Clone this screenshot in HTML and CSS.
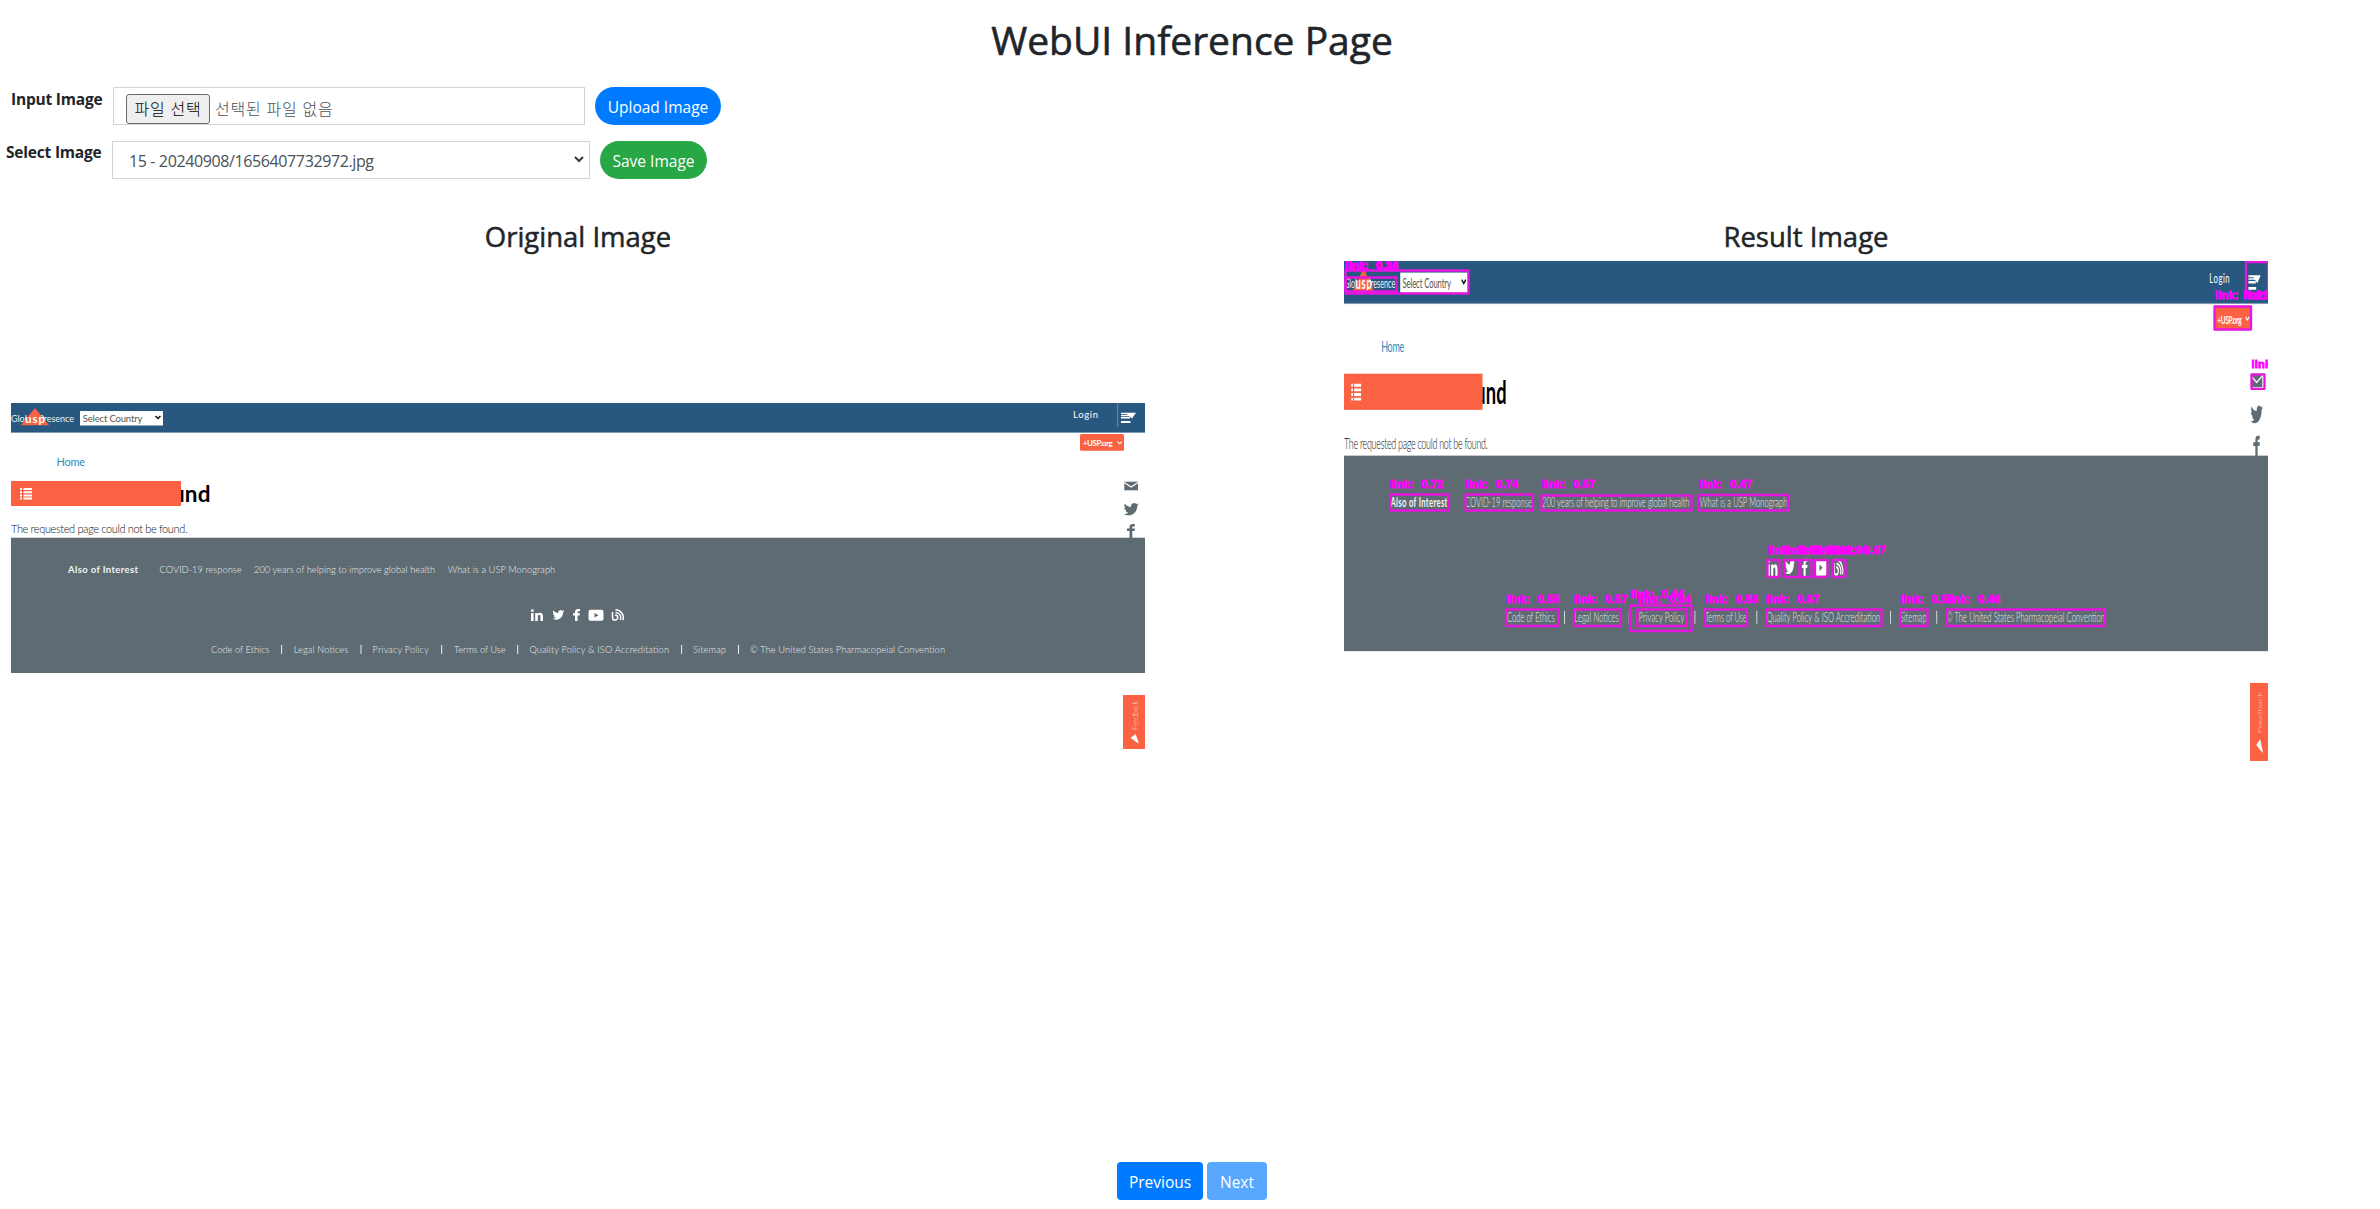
FILE: index.html
```html
<!DOCTYPE html>
<html lang="ko">
<head>
<meta charset="utf-8">
<title>WebUI Inference Page</title>
<link rel="stylesheet" href="styles.css">
</head>
<body>
<h1 class="title">WebUI Inference Page</h1>

<form class="controls">
  <div class="row row-upload">
    <label class="label">Input Image</label>
    <div class="field file"><span class="file-button">파일 선택</span><span class="file-name">선택된 파일 없음</span></div>
    <button type="button" class="btn pill primary upload">Upload Image</button>
  </div>
  <div class="row row-select">
    <label class="label">Select Image</label>
    <div class="field select"><span class="select-value">15 - 20240908/1656407732972.jpg</span>
      <svg class="caret" viewBox="0 0 10 7"><path d="M1 1l4 4 4-4" fill="none" stroke="#343a40" stroke-width="2"/></svg></div>
    <button type="button" class="btn pill success save">Save Image</button>
  </div>
</form>

<main class="gallery">
  <section class="panel original">
    <h2 class="heading">Original Image</h2>
    <svg class="shot shot-original" viewBox="0 0 1134 638">
      <rect width="1134" height="29.6" fill="#28587f"/>
      <rect y="29" width="1134" height="1" fill="#7d9ab2"/>
      <text class="rg" x="0" y="18.6" font-size="9" textLength="63" fill="#e6edf2">Global Presence</text>
      <path d="M24 5L38 22.3H9.7z" fill="#fb6244"/>
      <text class="bd" x="14" y="19.6" font-size="11.5" textLength="20" fill="#fff">usp</text>
      <rect x="69" y="8" width="83" height="14.5" fill="#fff"/>
      <text class="rg" x="71.7" y="18.6" font-size="9.5" textLength="59.7" fill="#555">Select Country</text>
      <path d="M144.5 13l2.5 2.5 2.5-2.5" fill="none" stroke="#111" stroke-width="1.5"/>
      <text class="rg" x="1062" y="15.2" font-size="9.5" textLength="25" fill="#fff">Login</text>
      <path d="M1106.7 0v24" stroke="#8a9c7c" stroke-width=".8"/>
      <path d="M1110 9.8h15l-4 5.6-3-2.4h-8v-1h7l-1-.7h-6zM1110 13.8h9v1.8h-9zM1110 18h9.5v1.9h-9.5z" fill="#fff"/>
      <rect x="1069" y="31" width="44" height="16.7" rx="1.5" fill="#fb6244"/>
      <text class="bd" x="1071.7" y="43.3" font-size="8" textLength="30" fill="#fff">+USP.org</text>
      <path d="M1106.5 38.7l2.2 2.2 2.2-2.2" fill="none" stroke="#fff" stroke-width="1.1"/>
      <path d="M1113.3 78.7h13.7v8.6h-13.7z" fill="#5f6b72"/>
      <path d="M1113.3 79.5l6.85 4.5 6.85-4.5" fill="none" stroke="#fff" stroke-width="1.2"/>
      <path transform="translate(1112.7 98.7) scale(.625)" fill="#5f6b72" d="M23.95 4.57a10 10 0 0 1-2.82.77 4.96 4.96 0 0 0 2.16-2.72c-.95.56-2 .97-3.13 1.19a4.92 4.92 0 0 0-8.38 4.48C7.69 8.1 4.07 6.13 1.64 3.16a4.82 4.82 0 0 0-.67 2.48c0 1.71.87 3.21 2.19 4.1a4.9 4.9 0 0 1-2.23-.62v.06a4.92 4.92 0 0 0 3.95 4.83 5 5 0 0 1-2.21.08 4.94 4.94 0 0 0 4.6 3.42A9.87 9.87 0 0 1 0 19.54a14 14 0 0 0 7.55 2.21c9.05 0 14-7.5 14-13.98 0-.21 0-.42-.02-.63a9.94 9.94 0 0 0 2.46-2.55z"/>
      <path d="M1118.5 136v-8h-2.5v-2.6h2.5v-1.4c0-2 1.3-3 3.2-3h2.1v2.5h-1.4c-.8 0-1.1.4-1.1 1v.9h2.7l-.4 2.6h-2.3v8z" fill="#5f6b72"/>
      <text class="rg" x="45.6" y="62.7" font-size="11" textLength="28.4" fill="#358cb5">Home</text>
      <text class="bd" x="161" y="98.7" font-size="22.5" textLength="38.5" fill="#000">und</text>
      <rect y="78" width="170" height="25" fill="#fb6244"/>
      <path d="M9 86h2M12.5 86H21M9 89.2h2M12.5 89.2H21M9 92.4h2M12.5 92.4H21M9 95.6h2M12.5 95.6H21" stroke="#fff" stroke-width="2"/>
      <text class="lt" x="0" y="130.3" font-size="11" textLength="176.5" fill="#111">The requested page could not be found.</text>
      <rect y="134.7" width="1134" height="135.3" fill="#5f6b72"/>
      <g font-size="9.3" fill="#e6edf0">
        <text class="bd" x="57" y="170.3" font-size="9.5" textLength="70" fill="#f0f3f4">Also of Interest</text>
        <text class="lt" x="148.6" y="170.3" textLength="82">COVID-19 response</text>
        <text class="lt" x="243" y="170.3" textLength="181">200 years of helping to improve global health</text>
        <text class="lt" x="436.7" y="170.3" textLength="107.5">What is a USP Monograph</text>
        <text class="lt" x="200" y="250" textLength="58.5">Code of Ethics</text>
        <text class="lt" x="282.7" y="250" textLength="54.5">Legal Notices</text>
        <text class="lt" x="361.6" y="250" textLength="56.2">Privacy Policy</text>
        <text class="lt" x="443" y="250" textLength="51.5">Terms of Use</text>
        <text class="lt" x="518.4" y="250" textLength="139.6">Quality Policy &amp; ISO Accreditation</text>
        <text class="lt" x="682" y="250" textLength="33">Sitemap</text>
        <text class="lt" x="739" y="250" textLength="195">© The United States Pharmacopeial Convention</text>
      </g>
      <path d="M270.6 242v9M350 242v9M430.7 242v9M506.7 242v9M670.6 242v9M727.5 242v9" stroke="#e8edef"/>
      <g fill="#fff">
        <path d="M520 210h2.6v8H520zM520 206.5h2.6v2.2H520zM524.2 210h2.5v1.2c1-2 5.3-2 5.3 1.7v5.1h-2.6v-4.5c0-2-2.6-1.8-2.6 0v4.5h-2.6z"/>
        <path transform="translate(541.5 206) scale(.49)" d="M23.95 4.57a10 10 0 0 1-2.82.77 4.96 4.96 0 0 0 2.16-2.72c-.95.56-2 .97-3.13 1.19a4.92 4.92 0 0 0-8.38 4.48C7.69 8.1 4.07 6.13 1.64 3.16a4.82 4.82 0 0 0-.67 2.48c0 1.71.87 3.21 2.19 4.1a4.9 4.9 0 0 1-2.23-.62v.06a4.92 4.92 0 0 0 3.95 4.83 5 5 0 0 1-2.21.08 4.94 4.94 0 0 0 4.6 3.42A9.87 9.87 0 0 1 0 19.54a14 14 0 0 0 7.55 2.21c9.05 0 14-7.5 14-13.98 0-.21 0-.42-.02-.63a9.94 9.94 0 0 0 2.46-2.55z"/>
        <path d="M564 218v-5.5h-2v-2.2h2v-1.3c0-2 1.2-3 3-3h2v2.2h-1.2c-.8 0-1.2.4-1.2 1v1.1h2.3l-.4 2.2h-1.9v5.5z"/>
        <path fill-rule="evenodd" d="M579.5 206.8h11q2 0 2 2v7q0 2-2 2h-11q-2 0-2-2v-7q0-2 2-2zM583.5 210v4.600l4-2.300z"/>
      </g>
      <path d="M601.5 209v5.500a2.600 2.600 0 1 0 2.600-2.600M604.500 209.500a5.500 5.500 0 0 1 5 7.500M604.500 206.800a8 8 0 0 1 7.500 10.200" fill="none" stroke="#fff" stroke-width="1.5"/>
      <rect x="1112" y="292" width="22" height="54" fill="#fb6244"/>
      <text class="lt" transform="translate(1126.5 327) rotate(-90)" font-size="7.5" textLength="29" fill="#ffd3c8">Feedback</text>
      <path d="M1119.5 335l5-4 3.500 9.500-3.500-2-2.500-2z" fill="#fff"/>
    </svg>
  </section>

  <section class="panel result">
    <h2 class="heading">Result Image</h2>
    <svg class="shot shot-result" viewBox="0 0 924 900">
      <g transform="scale(.8148 1.445)">
      <rect width="1134" height="29.6" fill="#28587f"/>
      <rect y="29" width="1134" height=".8" fill="#7d9ab2"/>
      <text class="rg" x="0" y="18.6" font-size="9" textLength="63" fill="#e6edf2">Global Presence</text>
      <path d="M24 5L38 22.3H9.7z" fill="#fb6244"/>
      <text class="bd" x="14" y="19.6" font-size="11.5" textLength="20" fill="#fff">usp</text>
      <rect x="69" y="8" width="83" height="14" fill="#fff"/>
      <text class="rg" x="71.7" y="18.6" font-size="9.5" textLength="59.7" fill="#555">Select Country</text>
      <path d="M144.5 13l2.5 2.5 2.5-2.5" fill="none" stroke="#111" stroke-width="1.5"/>
      <text class="rg" x="1062" y="15.2" font-size="9.5" textLength="25" fill="#fff">Login</text>
      <path d="M1110 9.8h15l-4 5.6-3-2.4h-8v-1h7l-1-.7h-6zM1110 13.8h9v1.8h-9zM1110 18h9.5v1.9h-9.5z" fill="#fff"/>
      <rect x="1069" y="31" width="44" height="16.7" fill="#fb6244"/>
      <text class="bd" x="1071.7" y="43.3" font-size="8" textLength="30" fill="#fff">+USP.org</text>
      <path d="M1106.5 38.7l2.2 2.2 2.2-2.2" fill="none" stroke="#fff" stroke-width="1.1"/>
      <path d="M1113.3 78.7h13.7v8.6h-13.7z" fill="#5f6b72"/>
      <path d="M1113.3 79.5l6.85 4.5 6.85-4.5" fill="none" stroke="#fff" stroke-width="1.2"/>
      <path transform="translate(1112.7 98.7) scale(.625)" fill="#5f6b72" d="M23.95 4.57a10 10 0 0 1-2.82.77 4.96 4.96 0 0 0 2.16-2.72c-.95.56-2 .97-3.13 1.19a4.92 4.92 0 0 0-8.38 4.48C7.69 8.1 4.07 6.13 1.64 3.16a4.82 4.82 0 0 0-.67 2.48c0 1.71.87 3.21 2.19 4.1a4.9 4.9 0 0 1-2.23-.62v.06a4.92 4.92 0 0 0 3.95 4.83 5 5 0 0 1-2.21.08 4.94 4.94 0 0 0 4.6 3.42A9.87 9.87 0 0 1 0 19.54a14 14 0 0 0 7.55 2.21c9.05 0 14-7.5 14-13.98 0-.21 0-.42-.02-.63a9.94 9.94 0 0 0 2.46-2.55z"/>
      <path d="M1118.5 136v-8h-2.5v-2.6h2.5v-1.4c0-2 1.3-3 3.2-3h2.1v2.5h-1.4c-.8 0-1.1.4-1.1 1v.9h2.7l-.4 2.6h-2.3v8z" fill="#5f6b72"/>
      <text class="rg" x="45.6" y="62.7" font-size="11" textLength="28.4" fill="#358cb5">Home</text>
      <text class="bd" x="161" y="98.7" font-size="22.5" textLength="38.5" fill="#000">und</text>
      <rect y="78" width="170" height="25" fill="#fb6244"/>
      <path d="M9 86h2M12.5 86H21M9 89.2h2M12.5 89.2H21M9 92.4h2M12.5 92.4H21M9 95.6h2M12.5 95.6H21" stroke="#fff" stroke-width="2"/>
      <text class="lt" x="0" y="130.3" font-size="11" textLength="176.5" fill="#111">The requested page could not be found.</text>
      <rect y="134.7" width="1134" height="135.3" fill="#5f6b72"/>
      <g font-size="9.3" fill="#e6edf0">
        <text class="bd" x="57" y="170.3" font-size="9.5" textLength="70" fill="#f0f3f4">Also of Interest</text>
        <text class="lt" x="148.6" y="170.3" textLength="82">COVID-19 response</text>
        <text class="lt" x="243" y="170.3" textLength="181">200 years of helping to improve global health</text>
        <text class="lt" x="436.7" y="170.3" textLength="107.5">What is a USP Monograph</text>
        <text class="lt" x="200" y="250" textLength="58.5">Code of Ethics</text>
        <text class="lt" x="282.7" y="250" textLength="54.5">Legal Notices</text>
        <text class="lt" x="361.6" y="250" textLength="56.2">Privacy Policy</text>
        <text class="lt" x="443" y="250" textLength="51.5">Terms of Use</text>
        <text class="lt" x="518.4" y="250" textLength="139.6">Quality Policy &amp; ISO Accreditation</text>
        <text class="lt" x="682" y="250" textLength="33">Sitemap</text>
        <text class="lt" x="739" y="250" textLength="195">© The United States Pharmacopeial Convention</text>
      </g>
      <path d="M270.6 242v9M350 242v9M430.7 242v9M506.7 242v9M670.6 242v9M727.5 242v9" stroke="#e8edef"/>
      <g fill="#fff">
        <path d="M520 210h2.6v8H520zM520 206.5h2.6v2.2H520zM524.2 210h2.5v1.2c1-2 5.3-2 5.3 1.7v5.1h-2.6v-4.5c0-2-2.6-1.8-2.6 0v4.5h-2.6z"/>
        <path transform="translate(541.5 206) scale(.49)" d="M23.95 4.57a10 10 0 0 1-2.82.77 4.96 4.96 0 0 0 2.16-2.72c-.95.56-2 .97-3.13 1.19a4.92 4.92 0 0 0-8.38 4.48C7.69 8.1 4.07 6.13 1.64 3.16a4.82 4.82 0 0 0-.67 2.48c0 1.71.87 3.21 2.19 4.1a4.9 4.9 0 0 1-2.23-.62v.06a4.92 4.92 0 0 0 3.95 4.83 5 5 0 0 1-2.21.08 4.94 4.94 0 0 0 4.6 3.42A9.87 9.87 0 0 1 0 19.54a14 14 0 0 0 7.55 2.21c9.05 0 14-7.5 14-13.98 0-.21 0-.42-.02-.63a9.94 9.94 0 0 0 2.46-2.55z"/>
        <path d="M564 218v-5.5h-2v-2.2h2v-1.3c0-2 1.2-3 3-3h2v2.2h-1.2c-.8 0-1.2.4-1.2 1v1.1h2.3l-.4 2.2h-1.9v5.5z"/>
        <path fill-rule="evenodd" d="M579.5 206.8h11q2 0 2 2v7q0 2-2 2h-11q-2 0-2-2v-7q0-2 2-2zM583.5 210v4.600l4-2.300z"/>
      </g>
      <path d="M601.5 209v5.500a2.600 2.600 0 1 0 2.600-2.600M604.500 209.500a5.500 5.500 0 0 1 5 7.500M604.500 206.800a8 8 0 0 1 7.500 10.200" fill="none" stroke="#fff" stroke-width="1.5"/>
      <rect x="1112" y="292" width="22" height="54" fill="#fb6244"/>
      <text class="lt" transform="translate(1126.5 327) rotate(-90)" font-size="7.5" textLength="29" fill="#ffd3c8">Feedback</text>
      <path d="M1119.5 335l5-4 3.500 9.500-3.500-2-2.500-2z" fill="#fff"/>
      </g>

      <!-- detected boxes -->
      <g class="boxes">
        <rect x="1.5" y="9.5" width="123" height="23"/>
        <rect x="1.5" y="16.5" width="51" height="14"/>
        <rect x="902" y="1" width="22" height="32"/>
        <rect x="870.5" y="45.5" width="36.5" height="23"/>
        <rect x="907.5" y="113.3" width="13" height="14.5"/>
        <rect x="46.3" y="233.5" width="58" height="16"/>
        <rect x="121.5" y="233.5" width="67.5" height="16"/>
        <rect x="197.5" y="234.5" width="150" height="15"/>
        <rect x="355" y="234" width="89" height="15.5"/>
        <rect x="423.5" y="299" width="12" height="17"/>
        <rect x="440" y="299" width="14.5" height="17"/>
        <rect x="455.5" y="299" width="12" height="17"/>
        <rect x="471" y="299" width="12.5" height="17"/>
        <rect x="489" y="299" width="12.5" height="17"/>
        <rect x="162" y="348.5" width="52.5" height="16.5"/>
        <rect x="230" y="348.5" width="46.5" height="16.5"/>
        <rect x="286" y="344.5" width="61.5" height="25.5"/>
        <rect x="293.3" y="348.5" width="49.5" height="16.5"/>
        <rect x="361" y="348.5" width="42" height="16.5"/>
        <rect x="422.5" y="348.5" width="115" height="16.5"/>
        <rect x="556.5" y="348.5" width="27" height="16.5"/>
        <rect x="603" y="348.5" width="158" height="16.5"/>
      </g>
      <g class="scores">
        <text x="1" y="8" textLength="53">link: 0.14</text>
        <text x="1" y="9" textLength="53">link: 0.32</text>
        <text x="871" y="38.3" textLength="53">link: 0.21</text>
        <text x="899" y="38.3" textLength="53">link: 0.34</text>
        <text x="907.5" y="107" textLength="53">link: 0.40</text>
        <text x="46" y="226.5" textLength="53">link: 0.72</text>
        <text x="121" y="226.5" textLength="53">link: 0.74</text>
        <text x="198" y="227.3" textLength="53">link: 0.57</text>
        <text x="355" y="226.5" textLength="53">link: 0.47</text>
        <text x="424" y="292.5" textLength="53">link: 0.65</text>
        <text x="440" y="292.5" textLength="53">link: 0.68</text>
        <text x="455" y="292.5" textLength="53">link: 0.61</text>
        <text x="471" y="292.5" textLength="53">link: 0.66</text>
        <text x="489" y="292.5" textLength="53">link: 0.67</text>
        <text x="162.500" y="341.5" textLength="53">link: 0.55</text>
        <text x="230" y="342.3" textLength="53">link: 0.57</text>
        <text x="286.500" y="337" textLength="53">link: 0.44</text>
        <text x="294" y="342" textLength="53">link: 0.64</text>
        <text x="361" y="342" textLength="53">link: 0.58</text>
        <text x="422" y="342" textLength="53">link: 0.67</text>
        <text x="556.500" y="342.3" textLength="53">link: 0.58</text>
        <text x="603" y="342.3" textLength="53">link: 0.46</text>
      </g>
    </svg>
  </section>
</main>

<nav class="pager">
  <button type="button" class="btn primary previous">Previous</button>
  <button type="button" class="btn primary next" disabled>Next</button>
</nav>
</body>
</html>
```
FILE: styles.css
```css
* { box-sizing: border-box; }
body {
  margin: 0;
  height: 1209px;
  overflow: hidden;
  background: #fff;
  color: #212529;
  font-family: "Open Sans", "Noto Sans CJK KR", sans-serif;
  font-size: 16px;
  line-height: 24px;
}
.title {
  margin: 0;
  padding: 16px 0 0 4px;
  height: 87px;
  font-size: 39px;
  font-weight: 500;
  -webkit-text-stroke: .6px #212529;
  line-height: 48px;
  text-align: center;
}
.controls { display: flex; flex-direction: column; gap: 16px; }
.row { display: flex; height: 38px; }
.row-upload { padding-left: 11px; }
.row-select { padding-left: 6px; }
.label { font-weight: 700; font-size: 15.5px; letter-spacing: -.2px; white-space: nowrap; }
.row-upload .label { width: 102px; }
.row-select .label { width: 106px; line-height: 23px; }
.field {
  display: flex;
  border: 1px solid #ced4da;
  color: #495057;
  overflow: hidden;
  white-space: nowrap;
}
.file { width: 472px; padding: 6px 12px; gap: 5px; font-weight: 300; }
.file-button {
  flex: none;
  width: 84px;
  height: 30px;
  border: 1px solid #6b6b6b;
  border-radius: 3px;
  background: #efefef;
  color: #000;
  line-height: 28px;
  letter-spacing: .8px;
  text-align: center;
}
.file-name { line-height: 30px; letter-spacing: .8px; }
.select { width: 478px; padding: 8px 5px 6px 16px; align-items: center; justify-content: space-between; }
.select-value { letter-spacing: -.38px; }
.caret { width: 10px; height: 7px; margin-bottom: 3px; }
.btn {
  height: 38px;
  padding: 1px 0 0;
  border: 0;
  border-radius: 4px;
  color: #fff;
  font: inherit;
  font-size: 15.5px;
  white-space: nowrap;
}
.pill { margin-left: 10px; border-radius: 20px; }
.primary { background: #007bff; }
.success { background: #28a745; }
.upload { width: 126px; }
.save { width: 107px; }
.previous { width: 86px; }
.next { width: 60px; opacity: .65; }
.gallery { display: flex; gap: 199px; height: 983px; padding: 40px 0 0 11px; }
.heading {
  margin: 0;
  height: 42px;
  font-size: 27.5px;
  font-weight: 500;
  -webkit-text-stroke: .5px #212529;
  line-height: 36px;
  text-align: center;
}
.panel { display: flex; flex-direction: column; }
.original { width: 1134px; }
.result { width: 924px; }
.shot { display: block; font-family: Lato, sans-serif; }
.shot-original { width: 1134px; height: 638px; margin-top: 142px; }
.shot-result { width: 924px; height: 900px; }
.lt { font-weight: 300; }
.rg { font-weight: 400; }
.bd { font-weight: 700; }
.boxes { fill: none; stroke: #e815e0; stroke-width: 2.3; stroke-linejoin: round; }
.scores {
  fill: #f0f;
  stroke: #f0f;
  stroke-width: .8;
  font-family: "Liberation Sans", sans-serif;
  font-size: 11px;
  font-weight: 700;
  word-spacing: 4px;
}
.pager { display: flex; justify-content: center; gap: 4px; padding-left: 4px; }
```
